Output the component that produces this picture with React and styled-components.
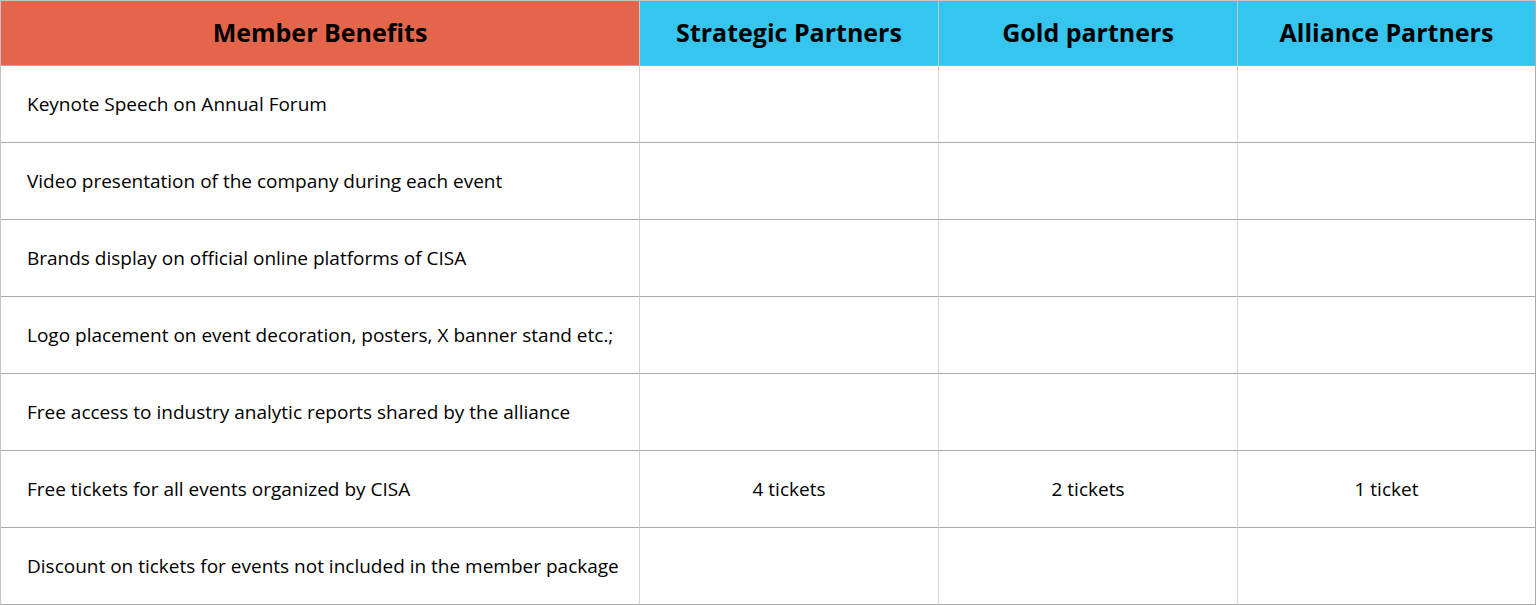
import React from "react";
import styled, { createGlobalStyle } from "styled-components";

const Global = createGlobalStyle`
  html, body { margin: 0; padding: 0; background: #fff; }
  body { font-family: "Open Sans", "Noto Sans", sans-serif; color: #000; }
`;

const Table = styled.div`
  display: grid;
  grid-template-columns: 639px 299px 299px 298px;
  grid-template-rows: 65px repeat(7, 77px);
  border-top: 1px solid #c4c4c4;
  border-left: 1px solid #c4c4c4;
  width: max-content;
`;

const HeadCell = styled.div`
  display: flex;
  align-items: center;
  justify-content: center;
  background: ${(p) => (p.$accent ? "#E5654B" : "#35C5EE")};
  border-right: 1px solid ${(p) => (p.$last ? "#aaaaaa" : "#c8c8c8")};
  border-bottom: 1px solid #aaaaaa;
  font-weight: 700;
  font-size: 25px;
  padding-bottom: 2px;
`;

const Cell = styled.div`
  display: flex;
  align-items: center;
  justify-content: ${(p) => (p.$left ? "flex-start" : "center")};
  padding-left: ${(p) => (p.$left ? "26px" : "0")};
  border-right: 1px solid ${(p) => (p.$last ? "#aaaaaa" : "#d4d4d4")};
  border-bottom: 1px solid #aaaaaa;
  font-size: 19px;
`;

const heads = ["Strategic Partners", "Gold partners", "Alliance Partners"];
const rows = [
  ["Keynote Speech on Annual Forum", "", "", ""],
  ["Video presentation of the company during each event", "", "", ""],
  ["Brands display on official online platforms of CISA", "", "", ""],
  ["Logo placement on event decoration, posters, X banner stand etc.;", "", "", ""],
  ["Free access to industry analytic reports shared by the alliance", "", "", ""],
  ["Free tickets for all events organized by CISA", "4 tickets", "2 tickets", "1 ticket"],
  ["Discount on tickets for events not included in the member package", "", "", ""],
];

export default function App() {
  return (
    <>
      <Global />
      <Table>
        <HeadCell $accent>Member Benefits</HeadCell>
        {heads.map((h, i) => (
          <HeadCell key={h} $last={i === heads.length - 1}>{h}</HeadCell>
        ))}
        {rows.map((r, ri) =>
          r.map((c, ci) => (
            <Cell key={`${ri}-${ci}`} $left={ci === 0} $last={ci === 3}>
              {c}
            </Cell>
          ))
        )}
      </Table>
    </>
  );
}
